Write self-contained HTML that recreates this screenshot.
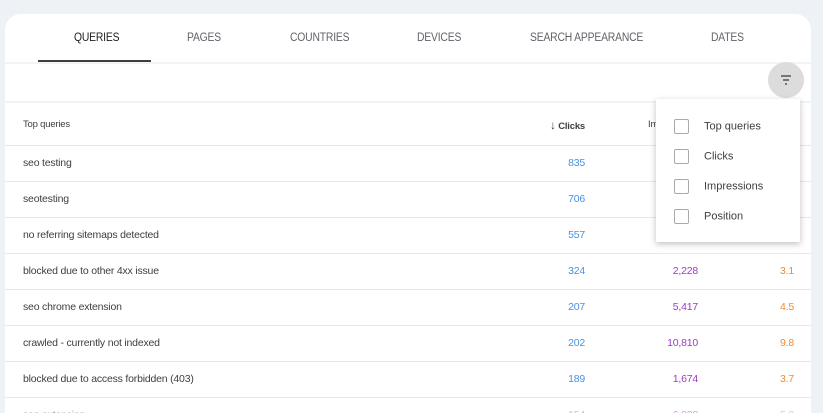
<!DOCTYPE html>
<html style="height:413px;overflow:hidden"><head><style>
body{margin:0;width:823px;height:413px;background:#eef2f7;font-family:"Liberation Sans",sans-serif;overflow:hidden;position:relative}
.card{position:absolute;left:5px;top:14px;width:806px;height:399px;background:#fff;border-radius:16px 16px 0 0;overflow:hidden}
.tab{position:absolute;top:18px;font-size:11.5px;color:#5f6368;letter-spacing:-0.2px;transform:scaleX(0.9);transform-origin:left}
.hl{position:absolute;left:0;width:806px;height:1px;background:#e6e8eb}
.row{position:absolute;left:0;width:806px;height:36px;font-size:10.5px;color:#3c4043;letter-spacing:-0.2px}
.row span{position:absolute;top:12px}
.q{left:18px}
.c{right:226px;color:#4a90e2}
.i{right:113px;color:#9c3bc4}
.p{right:17px;color:#f08a2e}
.dd{position:absolute;left:656px;top:99px;width:144px;height:143px;background:#fff;box-shadow:0 2px 6px rgba(0,0,0,.25)}
.it{position:absolute;left:18px;font-size:11px;color:#3c4043}
.cb{display:inline-block;width:13px;height:13px;border:1.5px solid #aaa;border-radius:2px;vertical-align:middle;margin-right:15px}
</style></head><body>
<div class="card">
<div class="tab" style="left:69px;color:#202124">QUERIES</div>
<div class="tab" style="left:182px">PAGES</div>
<div class="tab" style="left:285px">COUNTRIES</div>
<div class="tab" style="left:412px">DEVICES</div>
<div class="tab" style="left:525px">SEARCH APPEARANCE</div>
<div class="tab" style="left:706px">DATES</div>
<div style="position:absolute;left:33px;top:46px;width:113px;height:2px;background:#3c4043"></div>
<div class="hl" style="top:48px;height:2px;background:#f1f3f4"></div>
<div class="hl" style="top:87px;height:2px;background:#f1f3f4"></div>
<div style="position:absolute;left:763px;top:48px;width:36px;height:36px;border-radius:50%;background:#dcdcdc"></div>
<svg style="position:absolute;left:774px;top:59px" width="14" height="14"><path d="M2 3h10M4 7h6M6 11h2" stroke="#555" stroke-width="1.5"/></svg>
<div class="row" style="top:92px;font-size:9.5px"><span class="q" style="top:13px">Top queries</span><span class="c" style="color:#3c4043;top:12px;font-weight:bold"><span style="position:static;font-size:12px;font-weight:normal">&#8595;</span> Clicks</span><span style="left:643px;top:13px">Im</span></div>
<div class="hl" style="top:131px"></div>
<div class="row" style="top:131px"><span class="q">seo testing</span><span class="c">835</span></div>
<div class="hl" style="top:167px"></div>
<div class="row" style="top:167px"><span class="q">seotesting</span><span class="c">706</span></div>
<div class="hl" style="top:203px"></div>
<div class="row" style="top:203px"><span class="q">no referring sitemaps detected</span><span class="c">557</span></div>
<div class="hl" style="top:239px"></div>
<div class="row" style="top:239px"><span class="q">blocked due to other 4xx issue</span><span class="c">324</span><span class="i">2,228</span><span class="p">3.1</span></div>
<div class="hl" style="top:275px"></div>
<div class="row" style="top:275px"><span class="q">seo chrome extension</span><span class="c">207</span><span class="i">5,417</span><span class="p">4.5</span></div>
<div class="hl" style="top:311px"></div>
<div class="row" style="top:311px"><span class="q">crawled - currently not indexed</span><span class="c">202</span><span class="i">10,810</span><span class="p">9.8</span></div>
<div class="hl" style="top:347px"></div>
<div class="row" style="top:347px"><span class="q">blocked due to access forbidden (403)</span><span class="c">189</span><span class="i">1,674</span><span class="p">3.7</span></div>
<div class="hl" style="top:383px"></div>
<div class="row" style="top:383px;opacity:.5"><span class="q">seo extension</span><span class="c">154</span><span class="i">6,028</span><span class="p">5.8</span></div>
</div>
<div class="dd">
<div class="it" style="top:20px"><span class="cb"></span>Top queries</div>
<div class="it" style="top:50px"><span class="cb"></span>Clicks</div>
<div class="it" style="top:80px"><span class="cb"></span>Impressions</div>
<div class="it" style="top:110px"><span class="cb"></span>Position</div>
</div>
</body></html>
